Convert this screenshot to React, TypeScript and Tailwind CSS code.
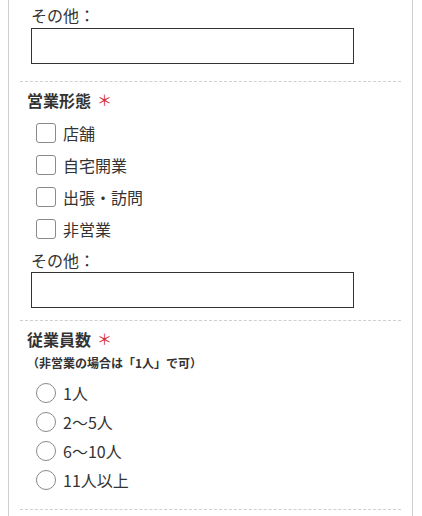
import { ReactNode } from "react";

const FONT = { fontFamily: '"Noto Sans CJK JP", "Noto Sans", sans-serif' };

function Required() {
  return <span className="ml-[6px] text-[15px] font-normal text-[#d2343b]">＊</span>;
}

function Heading({ children }: { children: ReactNode }) {
  return (
    <div className="ml-[7px] flex h-[24px] items-center text-[16px] font-bold leading-[24px] text-[#333]">
      {children}
      <Required />
    </div>
  );
}

function OtherInput({ gap }: { gap: string }) {
  return (
    <>
      <label className="ml-[11px] block text-[16px] leading-[24px] text-[#333]">その他：</label>
      <input
        type="text"
        className={`ml-[11px] block h-[36px] w-[323px] border border-[#333] bg-white px-2 text-[16px] outline-none ${gap}`}
      />
    </>
  );
}

function CheckRow({ label }: { label: string }) {
  return (
    <label className="ml-[16px] flex h-[32px] items-center gap-[7px] text-[16px] text-[#333]">
      <span className="h-[20px] w-[20px] rounded-[3px] border border-[#8a8a8a] bg-white" />
      {label}
    </label>
  );
}

function RadioRow({ label }: { label: string }) {
  return (
    <label className="ml-[16px] flex h-[29px] items-center gap-[7px] text-[16px] text-[#333]">
      <span className="h-[20px] w-[20px] rounded-full border border-[#8a8a8a] bg-white" />
      {label}
    </label>
  );
}

export default function App() {
  const types = ["店舗", "自宅開業", "出張・訪問", "非営業"];
  const staff = ["1人", "2〜5人", "6〜10人", "11人以上"];

  return (
    <div className="h-[516px] w-[422px] overflow-hidden bg-white" style={FONT}>
      <div className="ml-[8px] h-full w-[405px] border-x border-[#cfcfcf] px-[11px]">
        <div className="border-b border-dashed border-[#cfcfcf] pt-[3px] pb-[17px]">
          <OtherInput gap="mt-[1px]" />
        </div>

        <div className="border-b border-dashed border-[#cfcfcf] pt-[6px] pb-[12px]">
          <Heading>営業形態</Heading>
          <div className="mt-[5px] flex flex-col">
            {types.map((t) => (
              <CheckRow key={t} label={t} />
            ))}
          </div>
          <div className="mt-[3px]">
            <OtherInput gap="mt-0" />
          </div>
        </div>

        <div className="border-b border-dashed border-[#cfcfcf] pt-[6px] pb-[15px]">
          <Heading>従業員数</Heading>
          <p className="mt-[2px] ml-[7px] text-[12px] font-bold leading-[20px] text-[#333]">
            （非営業の場合は「1人」で可）
          </p>
          <div className="mt-[5px] flex flex-col">
            {staff.map((s) => (
              <RadioRow key={s} label={s} />
            ))}
          </div>
        </div>
      </div>
    </div>
  );
}
